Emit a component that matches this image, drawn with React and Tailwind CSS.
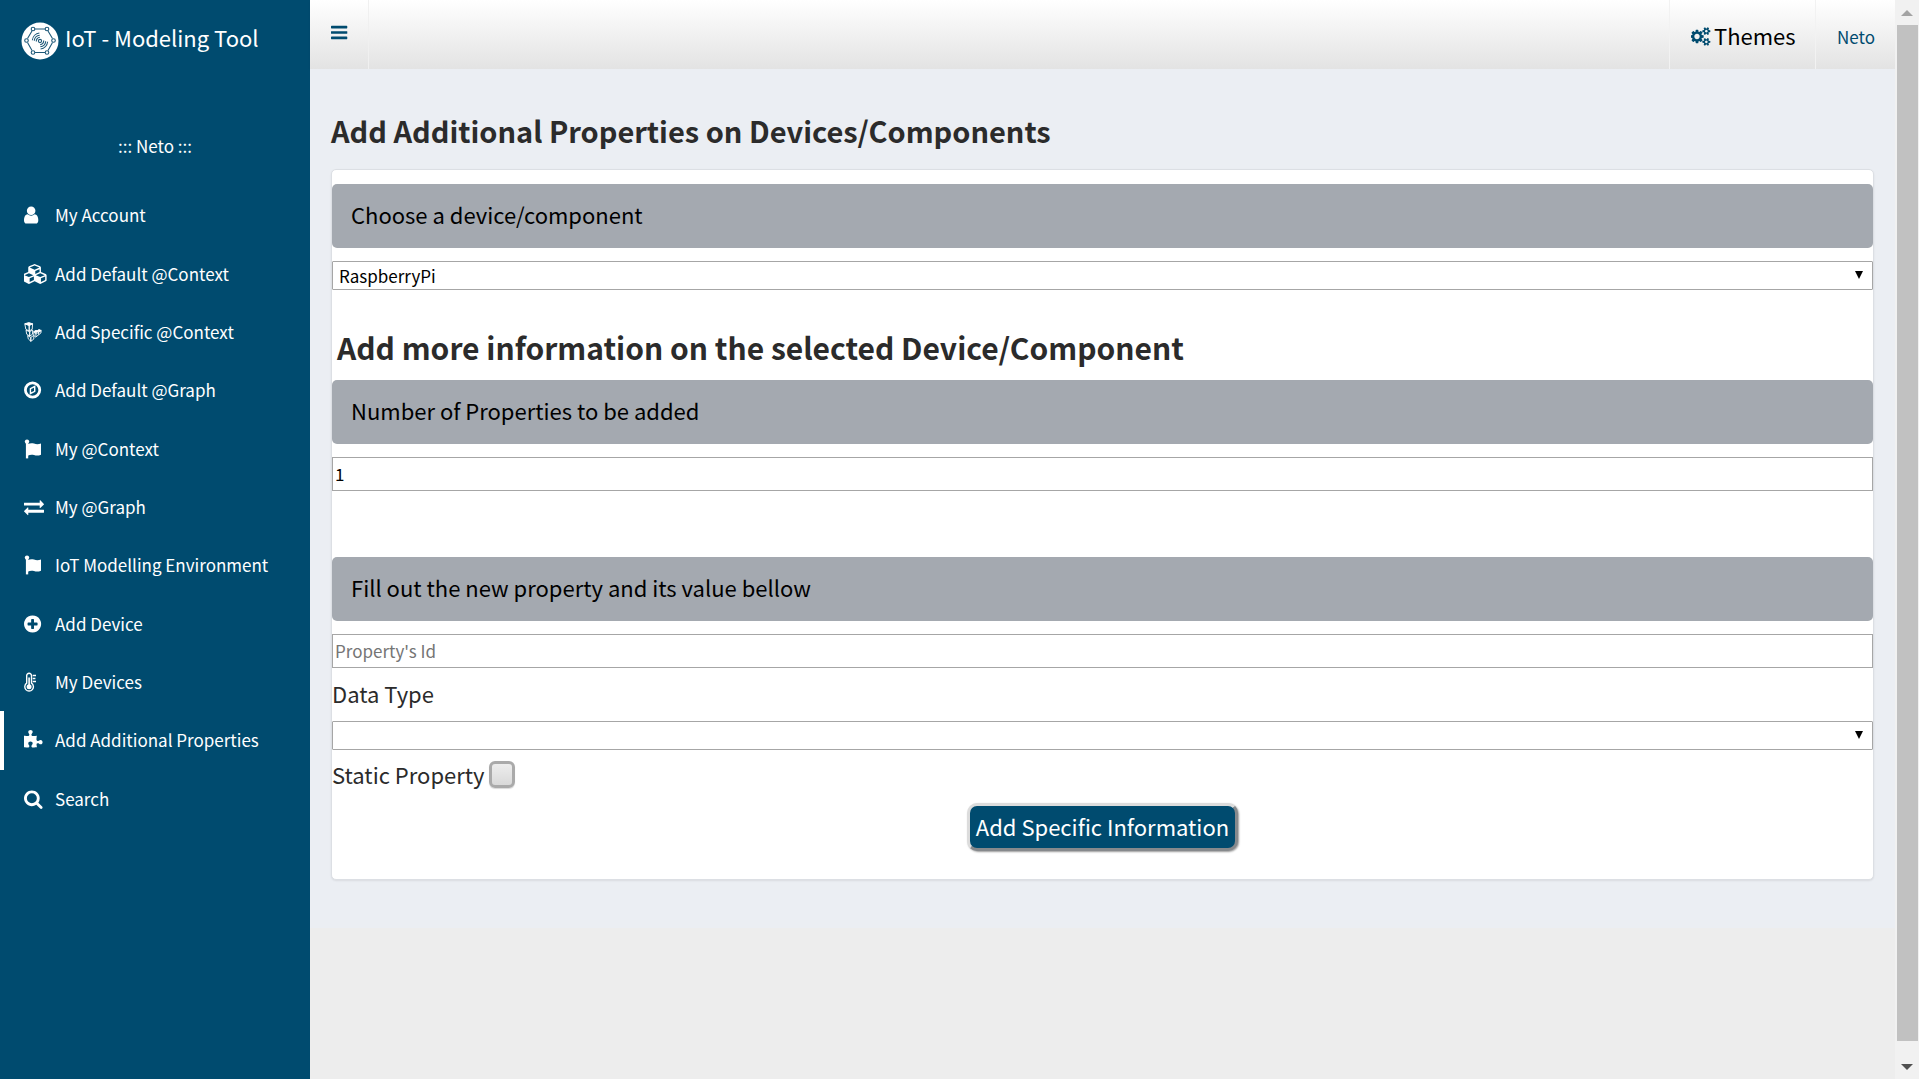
import { useState } from "react";

const PATHS = {
  user: "M1536 1399q0 109-62.5 187t-150.5 78h-854q-88 0-150.5-78t-62.5-187q0-85 8.5-160.5t31.5-152 58.5-131 94-89 134.5-34.5q131 128 313 128t313-128q76 0 134.5 34.5t94 89 58.5 131 31.5 152 8.5 160.5zm-256-887q0 159-112.5 271.5t-271.5 112.5-271.5-112.5-112.5-271.5 112.5-271.5 271.5-112.5 271.5 112.5 112.5 271.5z",
  cubes: "M640 1632l384-192v-314l-384 164v342zm-64-454l404-173-404-173-404 173 404 173zm1088 454l384-192v-314l-384 164v342zm-64-454l404-173-404-173-404 173 404 173zm-448-293l384-165v-266l-384 164v267zm-64-379l441-189-441-189-441 189 441 189zm1088 518v416q0 36-19 67t-52 47l-448 224q-25 14-57 14t-57-14l-448-224q-5-2-7-4-2 2-7 4l-448 224q-25 14-57 14t-57-14l-448-224q-33-16-52-47t-19-67v-416q0-38 21.5-70t56.5-48l434-186v-400q0-38 21.5-70t56.5-48l448-192q23-10 50-10t50 10l448 192q35 16 56.5 48t21.5 70v400l434 186q36 16 57 48t21 70z",
  compass: "M768 1105l256-128v-290l-256 128zM1152 480v576l-512 256v-576zM896 376a520 520 0 1 0 0 1040a520 520 0 1 0 0-1040zM896 128a768 768 0 1 1 0 1536a768 768 0 1 1 0-1536z",
  exchange: "M1792 1184v192q0 13-9.5 22.5t-22.5 9.5h-1376v192q0 13-9.5 22.5t-22.5 9.5q-12 0-24-10l-319-320q-9-9-9-22 0-14 9-23l320-320q9-9 23-9 13 0 22.5 9.5t9.5 22.5v192h1376q13 0 22.5 9.5t9.5 22.5zm0-544q0 14-9 23l-320 320q-9 9-23 9-13 0-22.5-9.5t-9.5-22.5v-192h-1376q-13 0-22.5-9.5t-9.5-22.5v-192q0-13 9.5-22.5t22.5-9.5h1376v-192q0-14 9-23t23-9q12 0 24 10l319 319q9 9 9 23z",
  plus: "M1344 960v-128q0-26-19-45t-45-19h-256v-256q0-26-19-45t-45-19h-128q-26 0-45 19t-19 45v256h-256q-26 0-45 19t-19 45v128q0 26 19 45t45 19h256v256q0 26 19 45t45 19h128q26 0 45-19t19-45v-256h256q26 0 45-19t19-45zm320-64q0 209-103 385.5t-279.5 279.5-385.5 103-385.5-103-279.5-279.5-103-385.5 103-385.5 279.5-279.5 385.5-103 385.5 103 279.5 279.5 103 385.5z",
  puzzle: "M1728 1098q0 81-44.5 135t-123.5 54q-41 0-77.5-17.5t-59-38-56.5-38-71-17.5q-110 0-110 124 0 39 16 115t15 115v5q-22 0-33 1-34 3-97.5 11.5t-115.5 13.5-98 5q-61 0-103-26.5t-42-83.5q0-37 17.5-71t38-56.5 38-59 17.5-77.5q0-79-54-123.5t-135-44.5q-84 0-143 45.5t-59 127.5q0 43 15 83t33.5 64.5 33.5 53 15 50.5q0 45-46 89-37 35-117 35-95 0-245-24-9-2-27.5-4t-27.5-4l-13-2q-1 0-3-1-2 0-2-1v-1024q2 1 17.5 3.5t34 5 21.5 3.5q150 24 245 24 80 0 117-35 46-44 46-89 0-22-15-50.5t-33.5-53-33.5-64.5-15-83q0-82 59-127.5t144-45.5q80 0 134 44.5t54 123.5q0 41-17.5 77.5t-38 59-38 56.5-17.5 71q0 57 42 83.5t103 26.5q64 0 180-15t163-17v2q-1 2-3.5 17.5t-5 34-3.5 21.5q-24 150-24 245 0 80 35 117 44 46 89 46 22 0 50.5-15t53-33.5 64.5-33.5 83-15q82 0 127.5 59t45.5 143z",
  search: "M1216 832q0-185-131.5-316.5t-316.5-131.5-316.5 131.5-131.5 316.5 131.5 316.5 316.5 131.5 316.5-131.5 131.5-316.5zm512 832q0 52-38 90t-90 38q-54 0-90-38l-343-342q-179 124-399 124-143 0-273.5-55.5t-225-150-150-225-55.5-273.5 55.5-273.5 150-225 225-150 273.5-55.5 273.5 55.5 225 150 150 225 55.5 273.5q0 220-124 399l343 343q37 37 37 90z",
  bars: "M1664 1344v128q0 26-19 45t-45 19h-1408q-26 0-45-19t-19-45v-128q0-26 19-45t45-19h1408q26 0 45 19t19 45zm0-512v128q0 26-19 45t-45 19h-1408q-26 0-45-19t-19-45v-128q0-26 19-45t45-19h1408q26 0 45 19t19 45zm0-512v128q0 26-19 45t-45 19h-1408q-26 0-45-19t-19-45v-128q0-26 19-45t45-19h1408q26 0 45 19t19 45z",
  cogs: "M832 896q0-106-75-181t-181-75-181 75-75 181 75 181 181 75 181-75 75-181zm768 512q0-52-38-90t-90-38-90 38-38 90q0 53 37.5 90.5t90.5 37.5 90.5-37.5 37.5-90.5zm0-1024q0-52-38-90t-90-38-90 38-38 90q0 53 37.5 90.5t90.5 37.5 90.5-37.5 37.5-90.5zm-384 421v185q0 10-7 19.5t-16 10.5l-155 24q-11 35-32 76 34 48 90 115 7 11 7 20 0 12-7 19-23 30-82.5 89.5t-78.5 59.5q-11 0-21-7l-115-90q-37 19-77 31-11 108-23 155-7 24-30 24h-186q-11 0-20-7.5t-10-17.5l-23-153q-34-10-75-31l-118 89q-7 7-20 7-11 0-21-8-144-133-144-160 0-9 7-19 10-14 41-53t47-61q-23-44-35-82l-152-24q-10-1-17-9.5t-7-19.5v-185q0-10 7-19.5t16-10.5l155-24q11-35 32-76-34-48-90-115-7-11-7-20 0-12 7-20 22-30 82-89t79-59q11 0 21 7l115 90q34-18 77-32 11-108 23-154 7-24 30-24h186q11 0 20 7.5t10 17.5l23 153q34 10 75 31l118-89q8-7 20-7 11 0 21 8 144 133 144 160 0 8-7 19-12 16-42 54t-45 60q23 48 34 82l152 23q10 2 17 10.5t7 19.5zm640 533v140q0 16-149 31-12 27-30 52 51 113 51 138 0 4-4 7-122 71-124 71-8 0-46-47t-52-68q-20 2-30 2t-30-2q-14 21-52 68t-46 47q-2 0-124-71-4-3-4-7 0-25 51-138-18-25-30-52-149-15-149-31v-140q0-16 149-31 13-29 30-52-51-113-51-138 0-4 4-7 4-2 35-20t59-34 30-16q8 0 46 46.5t52 67.5q20-2 30-2t30 2q51-71 92-112l6-2q4 0 124 70 4 3 4 7 0 25-51 138 17 23 30 52 149 15 149 31zm0-1024v140q0 16-149 31-12 27-30 52 51 113 51 138 0 4-4 7-122 71-124 71-8 0-46-47t-52-68q-20 2-30 2t-30-2q-14 21-52 68t-46 47q-2 0-124-71-4-3-4-7 0-25 51-138-18-25-30-52-149-15-149-31v-140q0-16 149-31 13-29 30-52-51-113-51-138 0-4 4-7 4-2 35-20t59-34 30-16q8 0 46 46.5t52 67.5q20-2 30-2t30 2q51-71 92-112l6-2q4 0 124 70 4 3 4 7 0 25-51 138 17 23 30 52 149 15 149 31z",
};

function Glyph({ name, box = "128 0 1792 1792", className = "h-5 w-5" }) {
  return (
    <svg viewBox={box} className={`shrink-0 ${className}`} fill="currentColor" fillRule="evenodd" aria-hidden="true">
      <path d={PATHS[name]} />
    </svg>
  );
}

function Flag() {
  return (
    <svg viewBox="0 0 18 20" className="h-5 w-[18px]" fill="currentColor" aria-hidden="true">
      <circle cx="3" cy="2.6" r="2.2" />
      <path d="M1.9 3h2.3v16.4H1.9z" />
      <path d="M3.6 5.1C6 4 8 3.9 10 4.6c2.400.8 4.600.8 7-.2v11.300c-2.400 1.100-4.600 1.200-7 .4-2-.7-4-.5-6.400.6z" />
    </svg>
  );
}

function CubeStack() {
  return (
    <svg viewBox="0 0 18 20" className="h-5 w-[18px]" fill="none" stroke="currentColor" strokeWidth="0.9" strokeLinejoin="round" aria-hidden="true">
      <path d="M.8 1.800L4.800.6l3.800 1.200-3.400 1.600z" fill="currentColor" />
      <path d="M.8 1.800l1 5.400 3.400 1.900V3.400zM8.600 1.800l-.4 5.400-3 1.900V3.400z" />
      <path d="M2 8.200l.7 4 3 1.900V9.700zM8.700 8l-.2 4.300-2.800 1.800V9.700z" />
      <path d="M3.600 13.600l.7 3.300 2.500 2.400V15.400zM6.800 15.400l3-2v3.700l-3 2.200z" />
      <path d="M9.800 9.600l2.200-1.300 2 1-2.100 1.500zM13.200 8.800l1.800-1.300 2.200 1-2.400 1.600z" fill="currentColor" />
      <path d="M9.800 9.600v3.900l1.900 1.600 5.200-4.100.3-2.500-5.300 3.600zM11.900 11.600v3.200M14.600 10.200v2.400" />
    </svg>
  );
}

function Thermometer() {
  return (
    <svg viewBox="0 0 12 20" className="h-5 w-3" fill="none" stroke="currentColor" aria-hidden="true">
      <path d="M2.700 11.200V3.600a2.400 2.400 0 0 1 4.800 0v7.600a4.300 4.300 0 1 1-4.800 0z" strokeWidth="1.400" />
      <circle cx="5.1" cy="14.8" r="2.5" fill="currentColor" stroke="none" />
      <path d="M5.100 14V5.500" strokeWidth="1.600" />
      <path d="M8.700 3.600H12M8.700 6.600H11.400M8.700 9.600H12" strokeWidth="1.500" />
    </svg>
  );
}

function Logo() {
  const nodes = [[12, 7], [26, 7], [5.5, 18.5], [32.5, 18.5], [12, 30.5], [26, 30.5]];
  return (
    <svg viewBox="0 0 38 38" className="h-[38px] w-[38px] shrink-0" aria-hidden="true">
      <circle cx="19" cy="19" r="18.5" fill="#fff" />
      <g fill="none" stroke="#1d5878" strokeWidth="1.1">
        <path d="M14 7h10M27 9l4.500 7.500M31.500 20.500L27 28.500M24 30.500H14M11 28.500L6.500 20.500M6.500 16.500L11 9" />
        {nodes.map(([x, y]) => (
          <circle key={`${x}-${y}`} cx={x} cy={y} r="1.8" fill="#fff" />
        ))}
        <circle cx="19" cy="19" r="1.6" />
        <path d="M15.300 19.500a3.800 3.800 0 0 1 3.600-4.200M13.300 18.800a5.900 5.900 0 0 1 5.400-5.600M11.400 18.200a8 8 0 0 1 7-7.200" />
        <path d="M22.700 18.500a3.800 3.800 0 0 1-3.600 4.200M24.700 19.200a5.900 5.900 0 0 1-5.400 5.600M26.600 19.800a8 8 0 0 1-7 7.200" />
      </g>
    </svg>
  );
}

const NAV = [
  ["My Account", <Glyph name="user" box="256 0 1792 1792" />],
  ["Add Default @Context", <Glyph name="cubes" box="128 0 2176 1792" className="h-5 w-6" />],
  ["Add Specific @Context", <CubeStack />],
  ["Add Default @Graph", <Glyph name="compass" />],
  ["My @Context", <Flag />],
  ["My @Graph", <Glyph name="exchange" box="0 0 1792 1792" />],
  ["IoT Modelling Environment", <Flag />],
  ["Add Device", <Glyph name="plus" />],
  ["My Devices", <Thermometer />],
  ["Add Additional Properties", <Glyph name="puzzle" box="64 0 1792 1792" />],
  ["Search", <Glyph name="search" box="64 0 1792 1792" />],
];

function Sidebar() {
  return (
    <aside className="w-[310px] shrink-0 bg-[#004b6f] text-white">
      <a href="#home" className="flex h-[68px] items-center gap-[6px] pt-[13px] pl-[21px]">
        <Logo />
        <span className="pb-2 text-[22px] leading-[30px] whitespace-nowrap">IoT - Modeling Tool</span>
      </a>
      <p className="mt-16 text-center text-[17px] leading-7">::: Neto :::</p>
      <nav className="mt-[26px] grid h-[642px] auto-rows-fr">
        {NAV.map(([label, icon]) => (
          <a
            key={label}
            href="#nav"
            aria-current={label === "Add Additional Properties" ? "page" : undefined}
            className="flex items-center border-l-4 border-transparent pl-5 text-[17px] leading-6 aria-[current=page]:border-white"
          >
            <span className="flex w-[31px] shrink-0 items-center">{icon}</span>
            {label}
          </a>
        ))}
      </nav>
    </aside>
  );
}

function Header() {
  return (
    <header className="flex h-[69px] items-stretch bg-linear-to-b from-white to-[#e3e3e3] text-[#004b6f] shadow-[0_1px_2px_rgba(0,0,0,0.06)]">
      <button type="button" aria-label="Toggle navigation" className="flex w-[59px] items-center border-r border-[#f0f0f0] pb-1 pl-[21px]">
        <Glyph name="bars" box="128 0 1792 1792" className="h-[19px] w-[19px]" />
      </button>
      <div className="ml-auto flex">
        <button type="button" className="flex w-[146px] items-center gap-[3px] border-l border-[#f2f2f2] pt-1 pl-[21px]">
          <Glyph name="cogs" box="0 0 1920 1792" className="h-[19px] w-5" />
          <span className="pb-1 text-[22px] leading-[30px] text-black">Themes</span>
        </button>
        <a href="#profile" className="flex w-20 items-center border-l border-[#f2f2f2] pt-1 pl-[21px] text-[17px] leading-6">
          Neto
        </a>
      </div>
    </header>
  );
}

function Bar({ htmlFor, children }) {
  return (
    <label htmlFor={htmlFor} className="block rounded-[5px] bg-[#a4a9b0] px-[19px] pt-[14px] pb-[18px] text-[22px] leading-8 text-black">
      {children}
    </label>
  );
}

function Select({ id, options }) {
  return (
    <div className="relative">
      <select id={id} className="block h-[29px] w-full appearance-none rounded-[1px] border border-[#a6a6a6] bg-white px-[6px] text-[17px] leading-6 text-black">
        {options.map((o) => (
          <option key={o}>{o}</option>
        ))}
      </select>
      <svg viewBox="0 0 8 8" className="pointer-events-none absolute top-[10px] right-[10px] h-2 w-2" aria-hidden="true">
        <path d="M0 0h8L4 8z" />
      </svg>
    </div>
  );
}

const INPUT = "block h-[34px] w-full border border-[#a6a6a6] bg-white px-[2px] pb-[2px] text-[17px] leading-6 text-black placeholder:text-[#757575]";

function Scrollbar() {
  return (
    <div className="sticky top-0 flex h-screen w-[24px] shrink-0 flex-col items-center bg-[#f1f1f1]" aria-hidden="true">
      <span className="flex h-[25px] items-center">
        <svg viewBox="0 0 12 6" className="h-[6px] w-3" fill="#a3a3a3"><path d="M6 0l6 6H0z" /></svg>
      </span>
      <span className="w-[21px] flex-1 bg-[#c1c1c1]" />
      <span className="flex h-[38px] items-end pb-[9px]">
        <svg viewBox="0 0 12 6" className="h-[6px] w-3" fill="#505050"><path d="M0 0h12L6 6z" /></svg>
      </span>
    </div>
  );
}

export default function App() {
  const [count, setCount] = useState("1");
  return (
    <div className="flex min-h-screen bg-[#ededed] font-['Noto_Sans_CJK_SC','Open_Sans',sans-serif] text-[#2b2b2b]">
      <Sidebar />
      <div className="min-w-0 flex-1">
        <Header />
        <main className="bg-[#ebeef3] px-[21px] pt-[41px] pb-12">
          <h1 className="text-[29px] leading-10 font-bold">Add Additional Properties on Devices/Components</h1>
          <form className="mt-[19px] rounded-[5px] border border-[#dcdfe4] bg-white pt-[14px] pb-7 shadow-[0_1px_2px_rgba(0,0,0,0.08)]" onSubmit={(e) => e.preventDefault()}>
            <Bar htmlFor="device">Choose a device/component</Bar>
            <div className="mt-[13px]">
              <Select id="device" options={["RaspberryPi"]} />
            </div>
            <h2 className="mt-[37px] mb-[13px] pl-[5px] text-[30px] leading-10 font-bold">Add more information on the selected Device/Component</h2>
            <Bar htmlFor="count">Number of Properties to be added</Bar>
            <input id="count" type="text" inputMode="numeric" value={count} onChange={(e) => setCount(e.target.value)} className={`mt-[13px] ${INPUT}`} />
            <div className="mt-[66px]">
              <Bar htmlFor="property">Fill out the new property and its value bellow</Bar>
            </div>
            <input id="property" type="text" placeholder="Property's Id" className={`mt-[13px] ${INPUT}`} />
            <label htmlFor="type" className="mt-[9px] mb-3 block text-[22px] leading-8">Data Type</label>
            <Select id="type" options={[""]} />
            <div className="mt-[7px] flex items-center gap-1">
              <label htmlFor="static" className="text-[22px] leading-[34px]">Static Property</label>
              <input id="static" type="checkbox" className="h-[27px] w-[26px] appearance-none rounded-[6px] border-[3px] border-[#aaaaaa] bg-linear-to-b from-[#ededed] to-[#d9d9d9] shadow-[0_1px_1px_rgba(0,0,0,0.15)] checked:to-[#004b6f]" />
            </div>
            <div className="mt-3 flex justify-center">
              <button type="submit" className="rounded-[10px] border-[3px] border-t-[#dcdcdc] border-r-[#86898c] border-b-[#86898c] border-l-[#dcdcdc] bg-[#004b6f] px-[6px] pt-[3px] pb-[5px] text-[22px] leading-[34px] text-white shadow-[1px_1px_2px_rgba(0,0,0,0.4)]">
                Add Specific Information
              </button>
            </div>
          </form>
        </main>
      </div>
      <Scrollbar />
    </div>
  );
}
